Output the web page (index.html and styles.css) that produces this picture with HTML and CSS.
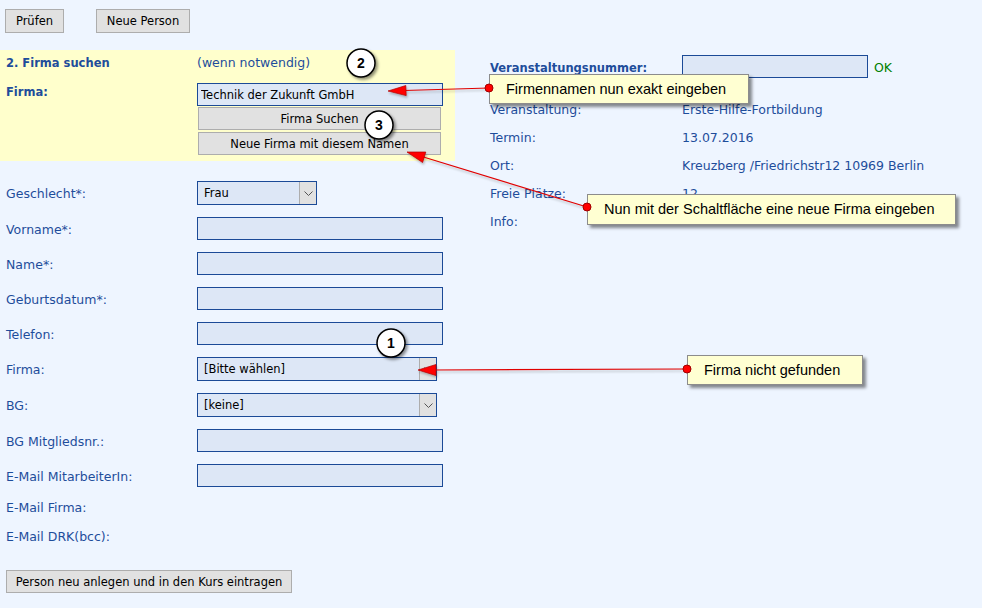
FILE: index.html
```html
<!DOCTYPE html>
<html lang="de">
<head>
    <meta charset="UTF-8">
    <title>Person anmelden</title>
    <link rel="stylesheet" href="styles.css">
</head>
<body>
    <div class="toolbar">
        <button class="btn btn-check">Prüfen</button>
        <button class="btn btn-new">Neue Person</button>
    </div>

    <div class="main">
        <div class="left">
            <div class="search">
                <div class="search-title">2. Firma suchen</div>
                <div class="search-hint">(wenn notwendig)</div>
                <div class="search-label">Firma:</div>
                <div class="search-controls">
                    <input class="field" type="text" value="Technik der Zukunft GmbH">
                    <button class="btn btn-panel">Firma Suchen</button>
                    <button class="btn btn-panel">Neue Firma mit diesem Namen</button>
                </div>
            </div>

            <div class="form">
                <div class="label">Geschlecht*:</div>
                <div class="select select-small"><span class="select-value">Frau</span><span class="select-arrow"><svg width="9" height="5" viewBox="0 0 9 5"><path d="M0.5 0.5 L4.5 4.5 L8.5 0.5" fill="none" stroke="#555" stroke-width="1"/></svg></span></div>

                <div class="label">Vorname*:</div>
                <input class="field" type="text">

                <div class="label">Name*:</div>
                <input class="field" type="text">

                <div class="label">Geburtsdatum*:</div>
                <input class="field" type="text">

                <div class="label">Telefon:</div>
                <input class="field" type="text">

                <div class="label">Firma:</div>
                <div class="select"><span class="select-value">[Bitte wählen]</span><span class="select-arrow"><svg width="9" height="5" viewBox="0 0 9 5"><path d="M0.5 0.5 L4.5 4.5 L8.5 0.5" fill="none" stroke="#555" stroke-width="1"/></svg></span></div>

                <div class="label">BG:</div>
                <div class="select"><span class="select-value">[keine]</span><span class="select-arrow"><svg width="9" height="5" viewBox="0 0 9 5"><path d="M0.5 0.5 L4.5 4.5 L8.5 0.5" fill="none" stroke="#555" stroke-width="1"/></svg></span></div>

                <div class="label">BG Mitgliedsnr.:</div>
                <input class="field" type="text">

                <div class="label">E-Mail MitarbeiterIn:</div>
                <input class="field" type="text">

                <div class="label text-row">E-Mail Firma:</div>
                <div class="text-row"></div>

                <div class="label text-row">E-Mail DRK(bcc):</div>
                <div class="text-row"></div>
            </div>

            <button class="btn btn-submit">Person neu anlegen und in den Kurs eintragen</button>
        </div>

        <div class="info">
            <div class="info-number">
                <div class="info-label strong">Veranstaltungsnummer:</div>
                <input class="field field-number" type="text">
                <span class="ok">OK</span>
            </div>
            <div class="info-list">
                <div class="info-label">Veranstaltung:</div><div class="info-value">Erste-Hilfe-Fortbildung</div>
                <div class="info-label">Termin:</div><div class="info-value">13.07.2016</div>
                <div class="info-label">Ort:</div><div class="info-value">Kreuzberg /Friedrichstr12 10969 Berlin</div>
                <div class="info-label">Freie Plätze:</div><div class="info-value">12</div>
                <div class="info-label">Info:</div><div class="info-value"></div>
            </div>
        </div>
    </div>

    <!-- Anmerkungen -->
    <div class="callout callout-name">Firmennamen nun exakt eingeben</div>
    <div class="callout callout-button">Nun mit der Schaltfläche eine neue Firma eingeben</div>
    <div class="callout callout-missing">Firma nicht gefunden</div>

    <svg class="overlay" width="982" height="608" viewBox="0 0 982 608">
        <defs>
            <filter id="shadow" x="-50%" y="-50%" width="200%" height="200%">
                <feDropShadow dx="2" dy="2" stdDeviation="1.5" flood-color="#000" flood-opacity="0.45"/>
            </filter>
            <filter id="lineshadow" x="-10%" y="-50%" width="120%" height="200%">
                <feDropShadow dx="1" dy="2" stdDeviation="1" flood-color="#000" flood-opacity="0.25"/>
            </filter>
        </defs>

        <g filter="url(#lineshadow)">
            <line x1="489" y1="88" x2="404" y2="90.5" stroke="#e00000" stroke-width="1.2"/>
            <polygon points="388,91 406.2,95.6 405.8,85.5" fill="#ff0000" stroke="#b00000" stroke-width="0.7"/>

            <line x1="587" y1="207" x2="421" y2="156.3" stroke="#e00000" stroke-width="1.2"/>
            <polygon points="407,152 425.8,152 422.6,162.5" fill="#ff0000" stroke="#b00000" stroke-width="0.7"/>

            <line x1="687" y1="369" x2="432" y2="370" stroke="#e00000" stroke-width="1.2"/>
            <polygon points="418,370 436,364.5 436,375.5" fill="#ff0000" stroke="#b00000" stroke-width="0.7"/>
        </g>

        <circle cx="489" cy="88" r="4" fill="#ff0000" stroke="#a00000" stroke-width="1"/>
        <circle cx="587" cy="207" r="4" fill="#ff0000" stroke="#a00000" stroke-width="1"/>
        <circle cx="687" cy="369" r="4" fill="#ff0000" stroke="#a00000" stroke-width="1"/>

        <g class="marker" filter="url(#shadow)">
            <circle cx="361" cy="63" r="14" fill="#fff" stroke="#000" stroke-width="1.5"/>
            <circle cx="379" cy="125" r="14" fill="#fff" stroke="#000" stroke-width="1.5"/>
            <circle cx="391" cy="343" r="14" fill="#fff" stroke="#000" stroke-width="1.5"/>
        </g>
        <text class="marker-text" x="361" y="68">2</text>
        <text class="marker-text" x="379" y="130">3</text>
        <text class="marker-text" x="391" y="348">1</text>
    </svg>
</body>
</html>
```

FILE: styles.css
```css
body {
    margin: 0;
    background-color: #eef5ff;
    font-family: "DejaVu Sans", Verdana, sans-serif;
    font-size: 12.5px;
    color: #1e4d9b;
    width: 982px;
    height: 608px;
    overflow: hidden;
    position: relative;
}
.toolbar {
    display: flex;
    gap: 32px;
    padding: 9px 0 0 5px;
    margin-bottom: 17px;
}
.btn {
    font-family: "DejaVu Sans", Verdana, sans-serif;
    font-size: 11.5px;
    color: #000;
    background-color: #e1e1e1;
    border: 1px solid #adadad;
    height: 24px;
    padding: 0 10px;
    margin: 0;
    box-sizing: border-box;
}
.btn-check {
    width: 59px;
    padding: 0;
}
.btn-new {
    width: 94px;
    padding: 0;
}
.main {
    display: flex;
    gap: 35px;
}
.left {
    width: 455px;
}
.search {
    background-color: #ffffcc;
    display: grid;
    grid-template-columns: 197px 246px;
    padding: 5px 0 6px 0;
}
.search-title {
    font-weight: bold;
    font-size: 11.5px;
    line-height: 16px;
    padding-left: 6px;
}
.search-hint {
    line-height: 16px;
}
.search-label {
    font-weight: bold;
    font-size: 11.5px;
    line-height: 16px;
    padding: 1px 0 0 6px;
    margin-top: 12px;
}
.search-controls {
    margin-top: 12px;
    display: flex;
    flex-direction: column;
    gap: 1px;
}
.btn-panel {
    width: 243px;
    height: 23px;
    margin-left: 1px;
}
.btn-panel + .btn-panel {
    margin-top: 1px;
}
.field {
    width: 246px;
    height: 23px;
    box-sizing: border-box;
    margin: 0;
    padding: 0 3px;
    background-color: #dde7f6;
    border: 1px solid #1b4a97;
    font-family: "DejaVu Sans", Verdana, sans-serif;
    font-size: 11.5px;
    color: #000;
    outline: none;
}
.form {
    display: grid;
    grid-template-columns: 197px 1fr;
    row-gap: 12px;
    margin-top: 20px;
    align-items: center;
}
.label {
    padding-left: 6px;
    padding-top: 1px;
}
.text-row {
    line-height: 16px;
    height: 16px;
}
.select {
    width: 240px;
    height: 24px;
    box-sizing: border-box;
    background-color: #dde7f6;
    border: 1px solid #1b4a97;
    display: flex;
    align-items: stretch;
    color: #000;
    font-size: 11.5px;
}
.select-small {
    width: 120px;
}
.select-value {
    flex: 1;
    line-height: 22px;
    padding-left: 6px;
}
.select-arrow {
    width: 16px;
    background-color: #e1e1e1;
    border-left: 1px solid #adadad;
    display: flex;
    align-items: center;
    justify-content: center;
}
.btn-submit {
    width: 286px;
    height: 23px;
    margin: 25px 0 0 6px;
    padding: 0;
}
.info {
    padding-top: 5px;
}
.info-number {
    display: flex;
    align-items: center;
    margin-bottom: 24px;
}
.info-number .info-label {
    width: 192px;
    padding-top: 3px;
}
.strong {
    font-weight: bold;
    font-size: 11.5px;
}
.field-number {
    width: 186px;
}
.ok {
    color: #008000;
    margin-left: 6px;
    padding-top: 2px;
}
.info-list {
    display: grid;
    grid-template-columns: 192px auto;
    row-gap: 12px;
    line-height: 16px;
}
.info-value {
    min-height: 16px;
}
.callout {
    position: absolute;
    box-sizing: border-box;
    background-color: #ffffd2;
    border: 1px solid #8c8c8c;
    box-shadow: 3px 3px 3px rgba(0, 0, 0, 0.45);
    font-family: "Liberation Sans", Arial, sans-serif;
    font-size: 14.5px;
    color: #000;
    padding-left: 16px;
    white-space: nowrap;
}
.callout-name {
    left: 489px;
    top: 74px;
    width: 260px;
    height: 30px;
    line-height: 28px;
}
.callout-button {
    left: 587px;
    top: 194px;
    width: 369px;
    height: 31px;
    line-height: 29px;
}
.callout-missing {
    left: 687px;
    top: 355px;
    width: 176px;
    height: 30px;
    line-height: 28px;
}
.overlay {
    position: absolute;
    left: 0;
    top: 0;
    pointer-events: none;
}
.marker-text {
    font-family: "Liberation Sans", Arial, sans-serif;
    font-size: 14px;
    font-weight: bold;
    text-anchor: middle;
    fill: #000;
}
```
